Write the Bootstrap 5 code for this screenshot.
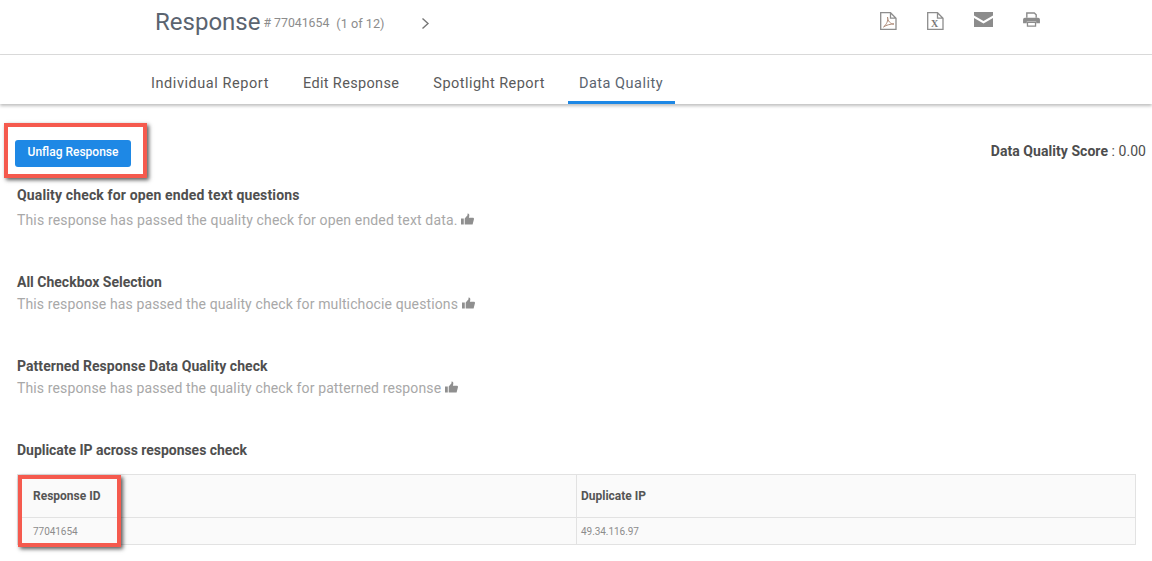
<!DOCTYPE html>
<html lang="en">
<head>
<meta charset="utf-8">
<title>Data Quality</title>
<link rel="stylesheet" href="https://cdn.jsdelivr.net/npm/bootstrap@5.3.0/dist/css/bootstrap.min.css">
<style>
html,body{height:561px;overflow:hidden}
body{font-family:Roboto,"Open Sans",sans-serif;color:#545454;background:#fff;font-size:14px;position:relative}
.top-head{height:55px;border-bottom:1px solid #dcdcdc;padding-left:155px;padding-right:112px}
.resp-title{font-size:24px;line-height:44px;color:#5b6470;letter-spacing:0;margin:0 3px 0 0;font-weight:400}
.resp-id{font-size:12.3px;color:#8c8c8c;margin-top:3px}
.resp-count{margin-left:7px;font-size:12.7px}
.resp-next{margin-left:37px;margin-top:3px}
.tool-icons{gap:30px}
.tool-icons svg{margin-top:12px}
.tabs-bar{height:49px;padding-left:140px;box-shadow:0 2px 3px rgba(0,0,0,.25);gap:12px}
.tab-link{display:block;padding:0 11px;height:49px;line-height:57px;color:#5a5a5a;text-decoration:none;font-size:14.5px;letter-spacing:.5px}
.tab-a{letter-spacing:.56px}
.tab-b{letter-spacing:.35px}
.tab-c{letter-spacing:.45px}
.tab-on{border-bottom:3px solid #1e88e5;color:#5b6470;padding-right:12px}
.main-area{padding:36px 6px 0 17px}
.flag-btn{background:#1e88e5;border:0;color:#fff;font-size:12px;font-weight:500;padding:0 0 3px;width:116px;height:27px;margin-left:-2px;border-radius:3px}
.dq-score{font-size:14px;color:#4d4d4d;margin:1px 0 0;letter-spacing:.05px}
.dq-score b{font-weight:700}
.chk-head{font-size:14px;font-weight:700;color:#4f4f4f;line-height:20px;margin:0;letter-spacing:.14px}
.head-b{letter-spacing:0}
.head-c{letter-spacing:.06px}
.head-d{letter-spacing:-.03px}
.chk-note{font-size:14px;color:#a8a8a8;line-height:20px;margin:2px 0 0;letter-spacing:.125px}
.chk-note svg{vertical-align:-1px}
.chk-block{height:84px}
.chk-first{height:87px;margin-top:18px}
.chk-first .chk-note{margin-top:5px;letter-spacing:.155px}
.dup-table{width:1119px;margin:14px 0 0;border-collapse:collapse;table-layout:fixed;background:#fafafa}
.dup-table td,.dup-table th{border:1px solid #e2e2e2;padding:0 4px;font-size:12px}
.dup-table th{height:43px;font-weight:700;color:#555}
.dup-table td{height:27px;color:#8c8c8c;font-size:10px;letter-spacing:-.05px}
.dup-table .pad-first{padding-left:15px}
.note-box{position:absolute;border:4px solid #f55a4e;box-shadow:2px 2px 4px rgba(0,0,0,.65)}
.box-one{left:4px;top:123px;width:143px;height:55px}
.box-two{left:18px;top:475px;width:103px;height:72px}
</style>
</head>
<body>
<header class="top-head d-flex justify-content-between align-items-start">
  <div class="d-flex align-items-center">
    <h1 class="resp-title">Response</h1>
    <span class="resp-id"># 77041654</span>
    <span class="resp-id resp-count">(1 of 12)</span>
    <svg class="resp-next" width="9" height="13" viewBox="0 0 9 13"><path d="M1.5 1.5 7 6.500 1.500 11.500" fill="none" stroke="#777" stroke-width="1.400"/></svg>
  </div>
  <div class="d-flex align-items-start tool-icons">
    <svg width="17" height="18" viewBox="0 0 17 18"><path d="M.7.7H10.500L16 6.200V17.300H.7Z M10.500.7V6.200H16" fill="none" stroke="#8d8d8d" stroke-width="1.300"/><path d="M3.500 15C6.500 12.500 8.500 8.500 7.500 5C7.500 9 10.500 12 14 12C10 12 6.500 13 3.500 15Z" fill="none" stroke="#b08d7a" stroke-width="1"/></svg>
    <svg width="17" height="18" viewBox="0 0 17 18"><path d="M.7.7H10.500L16 6.200V17.300H.7Z M10.500.7V6.200H16" fill="none" stroke="#8d8d8d" stroke-width="1.300"/><text x="4" y="15" font-size="10" font-weight="700" font-family="Liberation Serif,serif" fill="#777">X</text></svg>
    <svg width="19" height="15" viewBox="0 0 19 15"><path d="M0 0H19V3.500L9.500 9 0 3.500Z M0 6 9.500 11.500 19 6V15H0Z" fill="#8c8c8c"/></svg>
    <svg width="17" height="15" viewBox="0 0 18 16"><path d="M4 6V1H12L14 3V6" fill="none" stroke="#8c8c8c" stroke-width="1.500"/><path d="M0 8Q0 6 2 6H16Q18 6 18 8V12H14V10H4V12H0Z" fill="#8c8c8c"/><path d="M4.700 11H13.300V15H4.700Z" fill="none" stroke="#8c8c8c" stroke-width="1.400"/></svg>
  </div>
</header>
<nav class="tabs-bar d-flex">
  <a class="tab-link tab-a" href="#">Individual Report</a>
  <a class="tab-link tab-b" href="#">Edit Response</a>
  <a class="tab-link tab-c" href="#">Spotlight Report</a>
  <a class="tab-link tab-on" href="#">Data Quality</a>
</nav>
<main class="main-area">
  <div class="d-flex justify-content-between align-items-start">
    <button class="btn flag-btn" type="button">Unflag Response</button>
    <div class="dq-score"><b>Data Quality Score</b> : 0.00</div>
  </div>
  <section class="chk-block chk-first">
    <h2 class="chk-head">Quality check for open ended text questions</h2>
    <p class="chk-note">This response has passed the quality check for open ended text data. <svg width="13" height="13" viewBox="0 0 14 13"><path d="M0 5.500H3V12H0Z M4 5.500 7 2V0C9 0 9.500 1.500 8.500 4.500H13Q14 4.500 14 6L12.500 12H4Z" fill="#8f8f8f"/></svg></p>
  </section>
  <section class="chk-block">
    <h2 class="chk-head head-b">All Checkbox Selection</h2>
    <p class="chk-note">This response has passed the quality check for multichocie questions <svg width="13" height="13" viewBox="0 0 14 13"><path d="M0 5.500H3V12H0Z M4 5.500 7 2V0C9 0 9.500 1.500 8.500 4.500H13Q14 4.500 14 6L12.500 12H4Z" fill="#8f8f8f"/></svg></p>
  </section>
  <section class="chk-block">
    <h2 class="chk-head head-c">Patterned Response Data Quality check</h2>
    <p class="chk-note">This response has passed the quality check for patterned response <svg width="13" height="13" viewBox="0 0 14 13"><path d="M0 5.500H3V12H0Z M4 5.500 7 2V0C9 0 9.500 1.500 8.500 4.500H13Q14 4.500 14 6L12.500 12H4Z" fill="#8f8f8f"/></svg></p>
  </section>
  <section>
    <h2 class="chk-head head-d">Duplicate IP across responses check</h2>
    <table class="dup-table">
      <tr><th class="pad-first">Response ID</th><th>Duplicate IP</th></tr>
      <tr><td class="pad-first">77041654</td><td>49.34.116.97</td></tr>
    </table>
  </section>
</main>
<div class="note-box box-one"></div>
<div class="note-box box-two"></div>
<script src="https://cdn.jsdelivr.net/npm/bootstrap@5.3.0/dist/js/bootstrap.bundle.min.js"></script>
</body>
</html>
